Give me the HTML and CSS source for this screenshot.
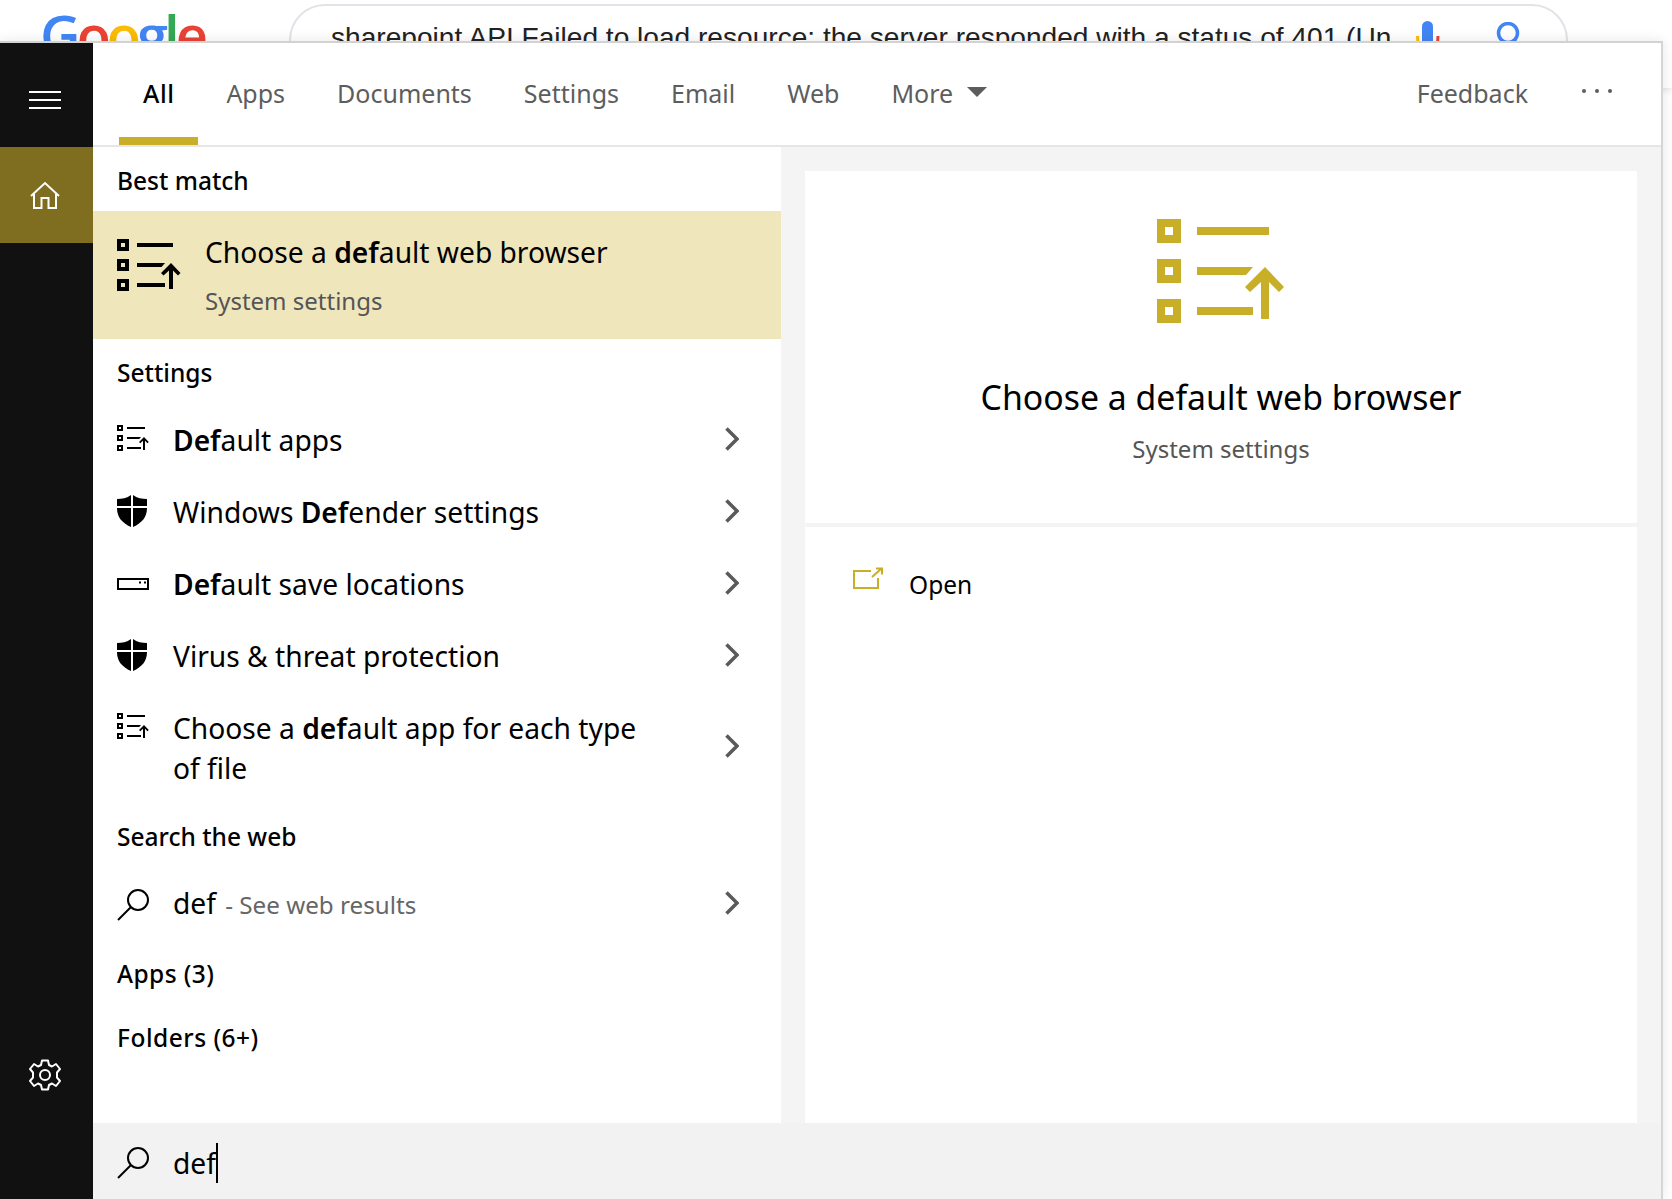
FILE: index.html
```html
<!DOCTYPE html>
<html lang="en">
<head>
<meta charset="utf-8">
<title>Search</title>
<link rel="stylesheet" href="styles.css">
</head>
<body>
<svg class="defs" width="0" height="0" aria-hidden="true">
  <symbol id="i-list" viewBox="0 0 128 104">
    <path fill="currentColor" fill-rule="evenodd" d="M0 0h24v24H0zM8 8v8h8V8zM0 40h24v24H0zM8 48v8h8v-8zM0 80h24v24H0zM8 88v8h8v-8z"/>
    <path fill="currentColor" d="M40 8h72v8H40zM40 48h56l-7 8H40zM40 88h56v8H40z"/>
    <path fill="currentColor" d="M108 48l19 20-5 5-10-10v37h-8V63L93 73l-5-5z"/>
  </symbol>
  <symbol id="i-shield" viewBox="0 0 30 32">
    <path fill="currentColor" d="M14 0C10 3 5 4 0 4v7h14zM16 0c4 3 9 4 14 4v7H16zM0 13h14v19C5 28 0 22 0 13zM16 13h14c0 9-5 15-14 19z"/>
  </symbol>
  <symbol id="i-search" viewBox="0 0 32 32">
    <circle cx="21" cy="11" r="10" fill="none" stroke="currentColor" stroke-width="2"/>
    <path d="M14 18L1 31" fill="none" stroke="currentColor" stroke-width="2"/>
  </symbol>
  <symbol id="i-chev" viewBox="0 0 14 24">
    <path d="M1.500 1.500L12 12 1.500 22.500" fill="none" stroke="currentColor" stroke-width="3.500"/>
  </symbol>
</svg>

<header class="google">
  <div class="logo"><span class="blue">G</span><span class="red">o</span><span class="yellow">o</span><span class="blue">g</span><span class="green">l</span><span class="red">e</span></div>
  <div class="pill">
    <span class="query">sharepoint API Failed to load resource: the server responded with a status of 401 (Un</span>
    <svg class="mic" width="26" height="40" viewBox="0 0 26 40">
      <rect x="6" y="0" width="11" height="32" rx="5.500" fill="#4285f4"/>
      <path d="M1.500 15c0 8 2 14 6 17" fill="none" stroke="#fbbc05" stroke-width="3"/>
      <path d="M22 15c0 8-1.500 14-5.500 17" fill="none" stroke="#ea4335" stroke-width="3"/>
    </svg>
    <svg class="glass" width="30" height="40" viewBox="0 0 30 40">
      <circle cx="15" cy="11" r="9.500" fill="none" stroke="#4285f4" stroke-width="3.500"/>
      <path d="M21 18l7 9" stroke="#4285f4" stroke-width="3.500"/>
    </svg>
  </div>
</header>

<div class="window">
  <nav class="rail">
    <div class="rail-top">
      <svg width="32" height="18" viewBox="0 0 32 18" fill="#fff"><path d="M0 0h32v2H0zM0 8h32v2H0zM0 16h32v2H0z"/></svg>
    </div>
    <div class="rail-home">
      <svg width="30" height="28" viewBox="0 0 30 28" fill="none" stroke="#fff" stroke-width="2"><path d="M1 15L15 2l14 13M4 13v14h7.500V17h7v10H26V13"/></svg>
    </div>
    <div class="rail-gear">
      <svg width="32" height="32" viewBox="0 0 32 32" fill="none" stroke="#fff" stroke-width="2"><circle cx="16" cy="16" r="5"/><path d="M13 1.500h6l1 4.500 3 1.500 4-2.500 4 5-3 3.500v5l3 3.500-4 5-4-2.500-3 1.500-1 4.500h-6l-1-4.500-3-1.500-4 2.500-4-5 3-3.500v-5l-3-3.500 4-5 4 2.500 3-1.500z" stroke-linejoin="round"/></svg>
    </div>
  </nav>

  <div class="main">
    <div class="tabs">
      <a class="tab tab-on">All</a>
      <a class="tab">Apps</a>
      <a class="tab">Documents</a>
      <a class="tab">Settings</a>
      <a class="tab">Email</a>
      <a class="tab">Web</a>
      <a class="tab">More<span class="caret-down"></span></a>
      <span class="tabs-gap"></span>
      <a class="feedback">Feedback</a>
      <span class="dots"><i></i><i></i><i></i></span>
    </div>

    <div class="body">
      <section class="results">
        <h2 class="head head-first">Best match</h2>
        <div class="best">
          <svg class="ico-best"><use href="#i-list"/></svg>
          <div>
            <div class="best-title">Choose a <b>def</b>ault web browser</div>
            <div class="best-sub">System settings</div>
          </div>
        </div>

        <h2 class="head head-settings">Settings</h2>
        <div class="row">
          <svg class="ico-small"><use href="#i-list"/></svg>
          <span class="label"><b>Def</b>ault apps</span>
          <svg class="chev"><use href="#i-chev"/></svg>
        </div>
        <div class="row">
          <svg class="ico-shield"><use href="#i-shield"/></svg>
          <span class="label">Windows <b>Def</b>ender settings</span>
          <svg class="chev"><use href="#i-chev"/></svg>
        </div>
        <div class="row">
          <svg class="ico-disk" viewBox="0 0 32 12" fill="none" stroke="currentColor" stroke-width="2"><rect x="1" y="1" width="30" height="10"/><path d="M22 4.500h2M27 4.500h2"/></svg>
          <span class="label"><b>Def</b>ault save locations</span>
          <svg class="chev"><use href="#i-chev"/></svg>
        </div>
        <div class="row">
          <svg class="ico-shield"><use href="#i-shield"/></svg>
          <span class="label">Virus &amp; threat protection</span>
          <svg class="chev"><use href="#i-chev"/></svg>
        </div>
        <div class="row row-tall">
          <svg class="ico-small ico-top"><use href="#i-list"/></svg>
          <span class="label label-wrap">Choose a <b>def</b>ault app for each type of file</span>
          <svg class="chev"><use href="#i-chev"/></svg>
        </div>

        <h2 class="head head-web">Search the web</h2>
        <div class="row row-web">
          <svg class="ico-search"><use href="#i-search"/></svg>
          <span class="label">def <span class="muted">- See web results</span></span>
          <svg class="chev"><use href="#i-chev"/></svg>
        </div>
        <h2 class="head head-apps">Apps (3)</h2>
        <h2 class="head head-folders">Folders (6+)</h2>
      </section>

      <section class="detail">
        <div class="card card-top">
          <svg class="ico-big"><use href="#i-list"/></svg>
          <div class="detail-title">Choose a default web browser</div>
          <div class="detail-sub">System settings</div>
        </div>
        <div class="card card-actions">
          <svg class="ico-open" viewBox="0 0 32 22" fill="none" stroke="currentColor" stroke-width="2"><path d="M18 4H1v17h24V11"/><path d="M19 10l9-8M23 1.500h6v6"/></svg>
          <span class="open">Open</span>
        </div>
      </section>
    </div>

    <div class="searchbar">
      <svg class="ico-search"><use href="#i-search"/></svg>
      <span class="typed">def</span>
    </div>
  </div>
</div>
</body>
</html>
```

FILE: styles.css
```css
* { box-sizing: border-box; }
html, body { margin: 0; height: 100%; overflow: hidden; background: #fff; }
body { position: relative; font-family: "Noto Sans", "Open Sans", sans-serif; color: #000; }
.defs { display: block; }

/* Page behind the flyout */
.google {
  display: flex;
  height: 88px;
  padding: 4px 0 0 40px;
  box-shadow: 0 1px 8px rgba(0,0,0,.14);
  background: #fff;
}
.logo {
  width: 249px;
  font-family: "Open Sans", sans-serif;
  font-size: 56px;
  font-weight: 600;
  line-height: 60px;
  letter-spacing: -4px;
}
.blue { color: #4285f4; }
.red { color: #ea4335; }
.yellow { color: #fbbc05; }
.green { color: #34a853; }
.pill {
  display: flex;
  align-items: center;
  width: 1279px;
  height: 72px;
  padding-left: 40px;
  border: 2px solid #e2e2e8;
  border-radius: 36px;
}
.query {
  width: 1085px;
  margin-top: -4px;
  font: 28.1px "Liberation Sans", Arial, sans-serif;
  color: #222;
  white-space: nowrap;
}
.mic { margin-top: 2px; }
.glass { margin-left: 51px; margin-top: 4px; }

/* Flyout window */
.window {
  position: absolute;
  top: 41px;
  left: 0;
  bottom: 0;
  width: 1663px;
  display: flex;
  border-top: 2px solid #d2d2d2;
  border-right: 2px solid #d6d6d6;
  background: #fff;
  box-shadow: 0 0 12px rgba(0,0,0,.1);
}
.rail {
  flex: 0 0 93px;
  display: flex;
  flex-direction: column;
  background: #111;
}
.rail-top, .rail-home, .rail-gear {
  display: flex;
  align-items: center;
  justify-content: center;
  padding-right: 3px;
}
.rail-top { height: 104px; padding-top: 10px; }
.rail-home { height: 96px; background: #7f6e20; }
.rail-gear { height: 96px; margin-top: auto; margin-bottom: 76px; }

.main { flex: 1; min-width: 0; display: flex; flex-direction: column; }

/* Tabs */
.tabs {
  flex: 0 0 104px;
  display: flex;
  align-items: stretch;
  gap: 4px;
  padding-left: 26px;
  border-bottom: 2px solid #e6e6e6;
  font-size: 25px;
  color: #5d5d5d;
}
.tab {
  display: flex;
  align-items: center;
  padding: 0 24px 2px;
}
.tab-on { color: #000; font-weight: 500; letter-spacing: .5px; box-shadow: inset 0 -8px 0 #c9ae27; }
.caret-down {
  width: 0;
  height: 0;
  margin: -2px 0 0 14px;
  border-left: 10px solid transparent;
  border-right: 10px solid transparent;
  border-top: 10px solid #5d5d5d;
}
.tabs-gap { flex: 1; }
.feedback { align-self: center; padding-bottom: 2px; }
.dots { align-self: center; display: flex; gap: 9px; margin: -6px 49px 0 50px; }
.dots i { width: 4px; height: 4px; border-radius: 50%; background: #5d5d5d; }

/* Body */
.body { flex: 1; min-height: 0; display: flex; }
.results { flex: 0 0 688px; }
.head {
  margin: 0;
  padding-left: 24px;
  font-size: 24.5px;
  line-height: 34px;
  font-weight: 500;
}
.head-first { padding-top: 17px; padding-bottom: 13px; }
.head-settings { padding-top: 17px; padding-bottom: 15px; }
.head-web { padding-top: 17px; padding-bottom: 17px; }
.head-apps { padding-top: 18px; letter-spacing: .4px; }
.head-folders { padding-top: 30px; letter-spacing: .5px; }

.best {
  display: flex;
  gap: 24px;
  height: 128px;
  padding: 28px 24px 0;
  background: #f0e6bc;
}
.ico-best { flex: none; width: 64px; height: 52px; }
.best-title { font-size: 28.2px; line-height: 30px; margin-top: -2px; }
.best-sub { font-size: 24px; line-height: 30px; margin-top: 19px; color: #555; }
b { font-weight: 600; }

.row {
  display: flex;
  align-items: center;
  gap: 24px;
  height: 72px;
  padding: 0 24px;
}
.row-tall { height: 110px; }
.row-web { height: 68px; }
.label { flex: 1; font-size: 28.2px; line-height: 40px; margin-top: -2px; }
.label-wrap { max-width: 480px; flex: none; margin-right: auto; margin-top: 0; }
.muted { font-size: 24.2px; margin-left: 2px; color: #666; }
.chev { flex: none; width: 14px; height: 24px; margin: -4px 18px 0 0; color: #5a5a5a; }
.ico-small { flex: none; width: 32px; height: 26px; margin-top: -6px; }
.ico-top { align-self: flex-start; margin-top: 20px; }
.ico-shield { flex: none; width: 32px; height: 32px; padding-right: 2px; margin-top: -4px; }
.ico-disk { flex: none; width: 32px; height: 12px; margin-top: -3px; }
.ico-search { flex: none; width: 32px; height: 32px; }

/* Detail pane */
.detail {
  flex: 1;
  display: flex;
  flex-direction: column;
  gap: 4px;
  padding: 24px 24px 0;
  background: #f4f4f4;
}
.card { background: #fff; }
.card-top {
  flex: 0 0 352px;
  display: flex;
  flex-direction: column;
  align-items: center;
  padding-top: 48px;
}
.ico-big { width: 128px; height: 104px; color: #c9ae27; margin-bottom: 51px; }
.detail-title { font-size: 33.8px; line-height: 46px; }
.detail-sub { font-size: 24px; line-height: 34px; margin-top: 12px; color: #555; }
.card-actions {
  flex: 1;
  display: flex;
  align-items: flex-start;
  gap: 24px;
  padding: 40px 0 0 48px;
}
.ico-open { width: 32px; height: 22px; color: #c9ae27; }
.open { font-size: 24.5px; line-height: 34px; margin-top: 1px; }

/* Search bar */
.searchbar {
  flex: 0 0 76px;
  display: flex;
  align-items: center;
  gap: 24px;
  padding: 4px 24px 0;
  background: #f2f2f2;
}
.typed {
  font-size: 28.2px;
  line-height: 40px;
  border-right: 2px solid #000;
}
```
